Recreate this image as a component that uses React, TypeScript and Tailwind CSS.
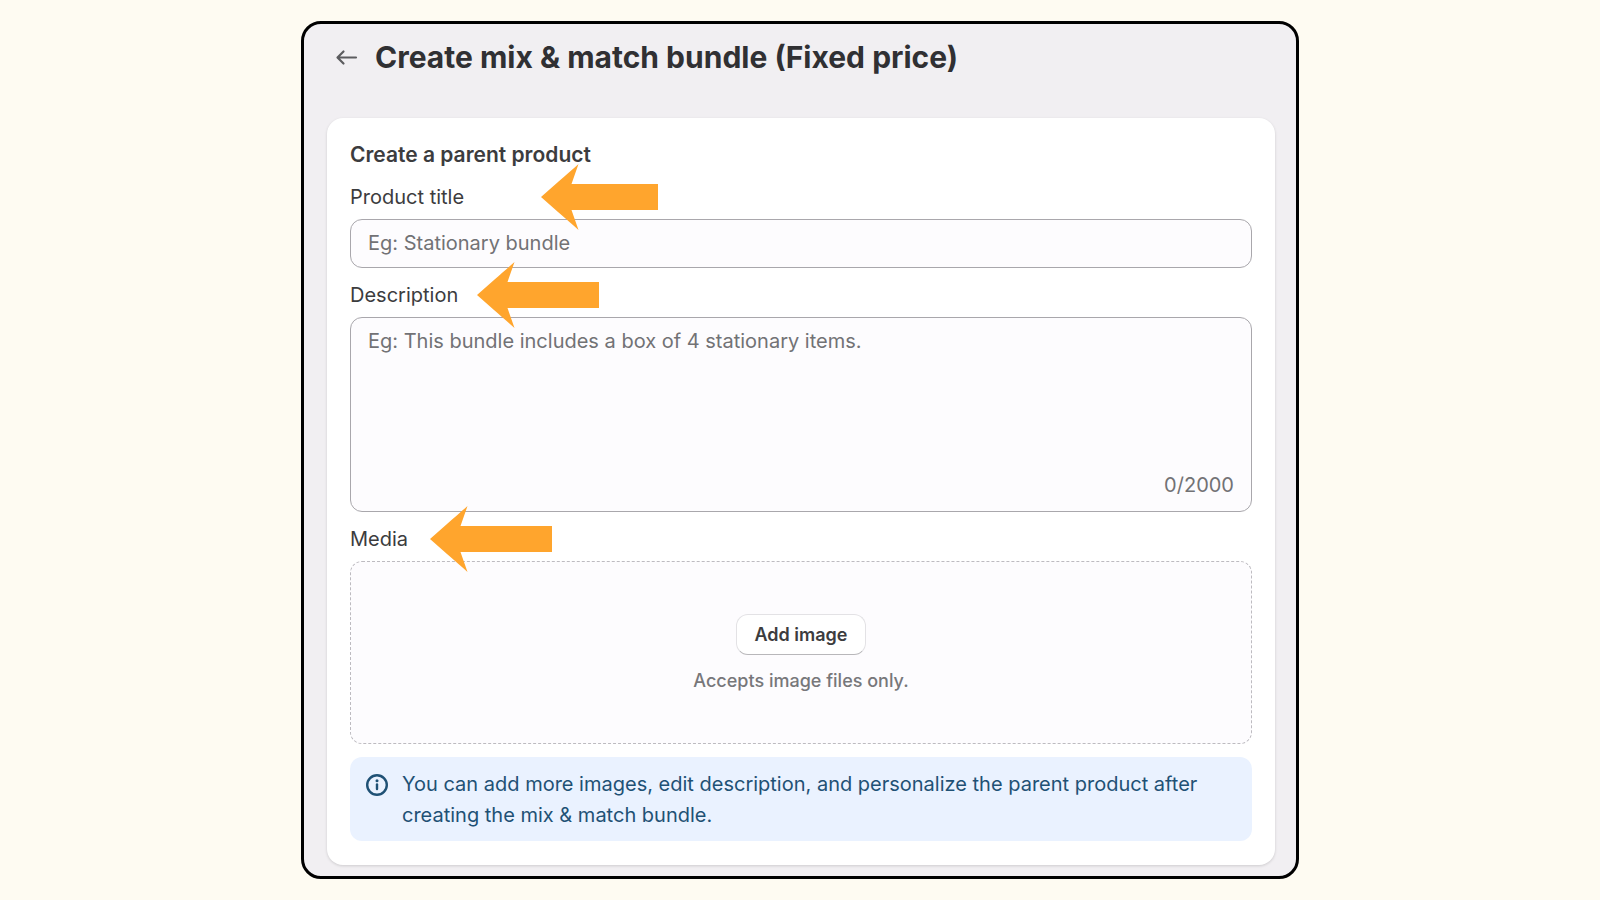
import { useState } from 'react';

const MAX_LENGTH = 2000;

// Orange pointer that sits over a field label
function Pointer({ className }: { className: string }) {
  return (
    <svg
      className={`pointer-events-none absolute top-1/2 z-10 h-[66px] -translate-y-1/2 ${className}`}
      viewBox="0 0 122 66"
      preserveAspectRatio="xMinYMid slice"
      aria-hidden="true"
    >
      <path d="M0 33L17 18C25 11 32 5 37.500 0L30.500 20H122V46H30.500L37.500 66C32 61 25 55 17 48Z" fill="#ffa52d" />
    </svg>
  );
}

export default function App() {
  const [title, setTitle] = useState("");
  const [description, setDescription] = useState("");

  return (
    <main className="min-h-screen bg-[#fefbf2] px-4 py-[21px] font-['Inter',sans-serif] text-xl text-[#3c3c3e]">
      <div className="mx-auto w-full max-w-[998px] rounded-[20px] border-3 border-black bg-[#f1eff2] pr-[21px] pb-[11px] pl-[23px]">

        {/* Header */}
        <header className="flex items-center gap-4 pt-[13px] pb-[41px] pl-2">
          <button type="button" aria-label="Back" className="flex h-10 w-6 items-center justify-center">
            <svg className="h-6 w-6" viewBox="0 0 24 24" fill="none" stroke="#5c5c5f" strokeWidth="2.200" strokeLinecap="round" strokeLinejoin="round">
              <path d="M21 12.500H3M8.500 6.500L2.500 12.500L8.500 18.500" />
            </svg>
          </button>
          <h1 className="text-[30px] leading-10 font-bold text-[#303033]">Create mix &amp; match bundle (Fixed price)</h1>
        </header>

        {/* Product form */}
        <form className="rounded-2xl bg-white px-[23px] pt-[22px] pb-6 shadow-[0_1px_3px_rgba(0,0,0,0.15)]">
          <h2 className="text-[21px] leading-[30px] font-semibold">Create a parent product</h2>

          <div className="relative mt-3 mb-[7px] leading-[30px]">
            <label htmlFor="title">Product title</label>
            <Pointer className="left-[191px] w-[117px]" />
          </div>
          <input
            id="title"
            className="block h-[49px] w-full rounded-xl border border-[#a9a7ac] bg-[#fdfcfe] px-[17px] pb-[2px] placeholder:text-[#727275]"
            placeholder="Eg: Stationary bundle"
            value={title}
            onChange={(e) => setTitle(e.target.value)}
          />

          <div className="relative mt-3 mb-[7px] leading-[30px]">
            <label htmlFor="description">Description</label>
            <Pointer className="left-[127px] w-[122px]" />
          </div>
          <div className="rounded-xl border border-[#a9a7ac] bg-[#fdfcfe] px-[17px] pt-2 pb-[11px]">
            <textarea
              id="description"
              className="block h-36 w-full resize-none leading-[30px] outline-none placeholder:text-[#727275]"
              placeholder="Eg: This bundle includes a box of 4 stationary items."
              maxLength={MAX_LENGTH}
              value={description}
              onChange={(e) => setDescription(e.target.value)}
            />
            <p className="text-right leading-[30px] text-[#727275]">{description.length}/{MAX_LENGTH}</p>
          </div>

          <div className="relative mt-3 mb-[7px] leading-[30px]">
            <span>Media</span>
            <Pointer className="left-20 w-[122px]" />
          </div>
          <div className="flex flex-col items-center rounded-xl border border-dashed border-[#bdbbc0] bg-[#fdfcfe] pt-[52px] pb-[47px]">
            <button type="button" className="h-[41px] rounded-xl border border-[#e3e2e5] border-b-[#b8b7ba] bg-white px-[18px] text-lg font-semibold">
              Add image
            </button>
            <p className="mt-[11px] text-lg leading-[30px] font-medium text-[#77777a]">Accepts image files only.</p>
          </div>

          {/* Info banner */}
          <div className="mt-[13px] flex gap-[13px] rounded-xl bg-[#eaf2ff] pt-3 pr-4 pb-[10px] pl-[15px] text-[#1f5175]">
            <svg className="mt-1 h-6 w-6 shrink-0" viewBox="0 0 24 24" fill="none" stroke="currentColor" strokeWidth="2.400" strokeLinecap="round" aria-hidden="true">
              <circle cx="12" cy="12" r="9.800" />
              <path d="M12 11.500V16" />
              <circle cx="12" cy="7.700" r="1.500" fill="currentColor" stroke="none" />
            </svg>
            <p className="leading-[31px]">
              You can add more images, edit description, and personalize the parent product after creating the mix &amp; match bundle.
            </p>
          </div>
        </form>
      </div>
    </main>
  );
}
